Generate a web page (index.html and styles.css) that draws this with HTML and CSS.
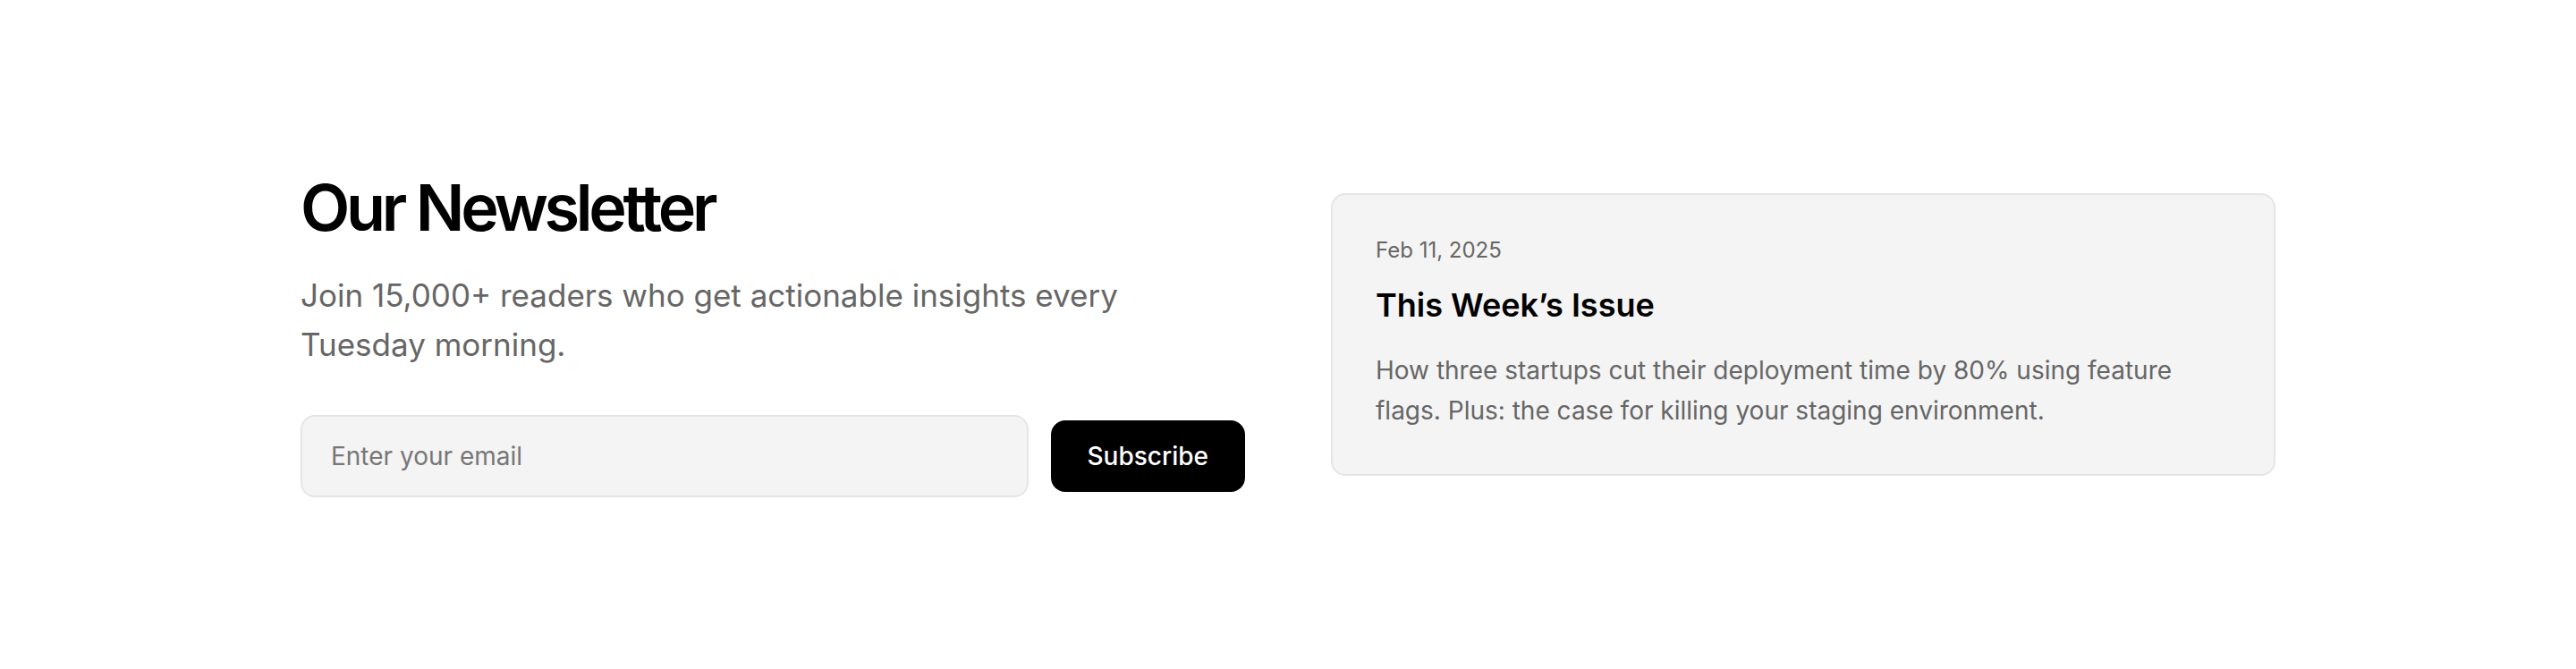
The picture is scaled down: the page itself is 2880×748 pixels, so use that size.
FILE: index.html
```html
<!DOCTYPE html>
<html lang="en">
<head>
    <meta charset="utf-8">
    <meta name="viewport" content="width=device-width, initial-scale=1">
    <title>Our Newsletter</title>

    <link rel="stylesheet" href="styles.css">
</head>
<body>

    <section class="newsletter">
        <div class="newsletter_intro">
            <h1>Our Newsletter</h1>
            <p class="lead">Join 15,000+ readers who get actionable insights every Tuesday morning.</p>

            <form class="signup" onsubmit="return false;">
                <input type="email" class="signup-input" placeholder="Enter your email">
                <button type="submit" class="btn-subscribe">Subscribe</button>
            </form>
        </div>

        <article class="issue-card">
            <div class="issue-date">Feb 11, 2025</div>
            <h2 class="issue-title">This Week’s Issue</h2>
            <p class="issue-text">How three startups cut their deployment time by 80% using feature flags. Plus: the case for killing your staging environment.</p>
        </article>
    </section>

</body>
</html>
```

FILE: styles.css
```css
body {
    margin: 0;
    font-family: Inter, "Noto Sans", sans-serif;
    color: #000;
    background-color: #fff;
}

.newsletter {
    box-sizing: border-box;
    min-height: 100vh;
    max-width: 2208px;
    margin: 0 auto;
    display: grid;
    grid-template-columns: 1fr 1fr;
    gap: 96px;
    align-items: center;
}

.newsletter_intro h1 {
    font-size: 72px;
    font-weight: 600;
    line-height: 1.1;
    letter-spacing: -0.06em;
    margin: 0 0 32px;
}

.lead {
    font-size: 35px;
    line-height: 55px;
    color: #666;
    margin: 0 0 51px;
    max-width: 960px;
}

.signup {
    display: flex;
    align-items: center;
    gap: 25px;
}

.signup-input {
    flex: 1;
    height: 92px;
    box-sizing: border-box;
    padding: 0 32px;
    font-family: inherit;
    font-size: 28px;
    color: #000;
    background-color: #f4f4f4;
    border: 2px solid #e5e5e5;
    border-radius: 16px;
    outline: none;
}

.signup-input::placeholder {
    color: #777;
}

.btn-subscribe {
    height: 80px;
    padding: 0 41px;
    font-family: inherit;
    font-size: 28px;
    font-weight: 500;
    color: #fff;
    background-color: #000;
    border: none;
    border-radius: 16px;
    cursor: pointer;
}

.issue-card {
    background-color: #f4f4f4;
    border: 2px solid #e5e5e5;
    border-radius: 16px;
    padding: 46px 48px 49px;
}

.issue-date {
    font-size: 24px;
    line-height: 32px;
    color: #666;
}

.issue-title {
    font-size: 36px;
    font-weight: 600;
    line-height: 1.2;
    margin: 24px 0 29px;
}

.issue-text {
    font-size: 28px;
    line-height: 1.6;
    color: #666;
    margin: 0;
}
```
